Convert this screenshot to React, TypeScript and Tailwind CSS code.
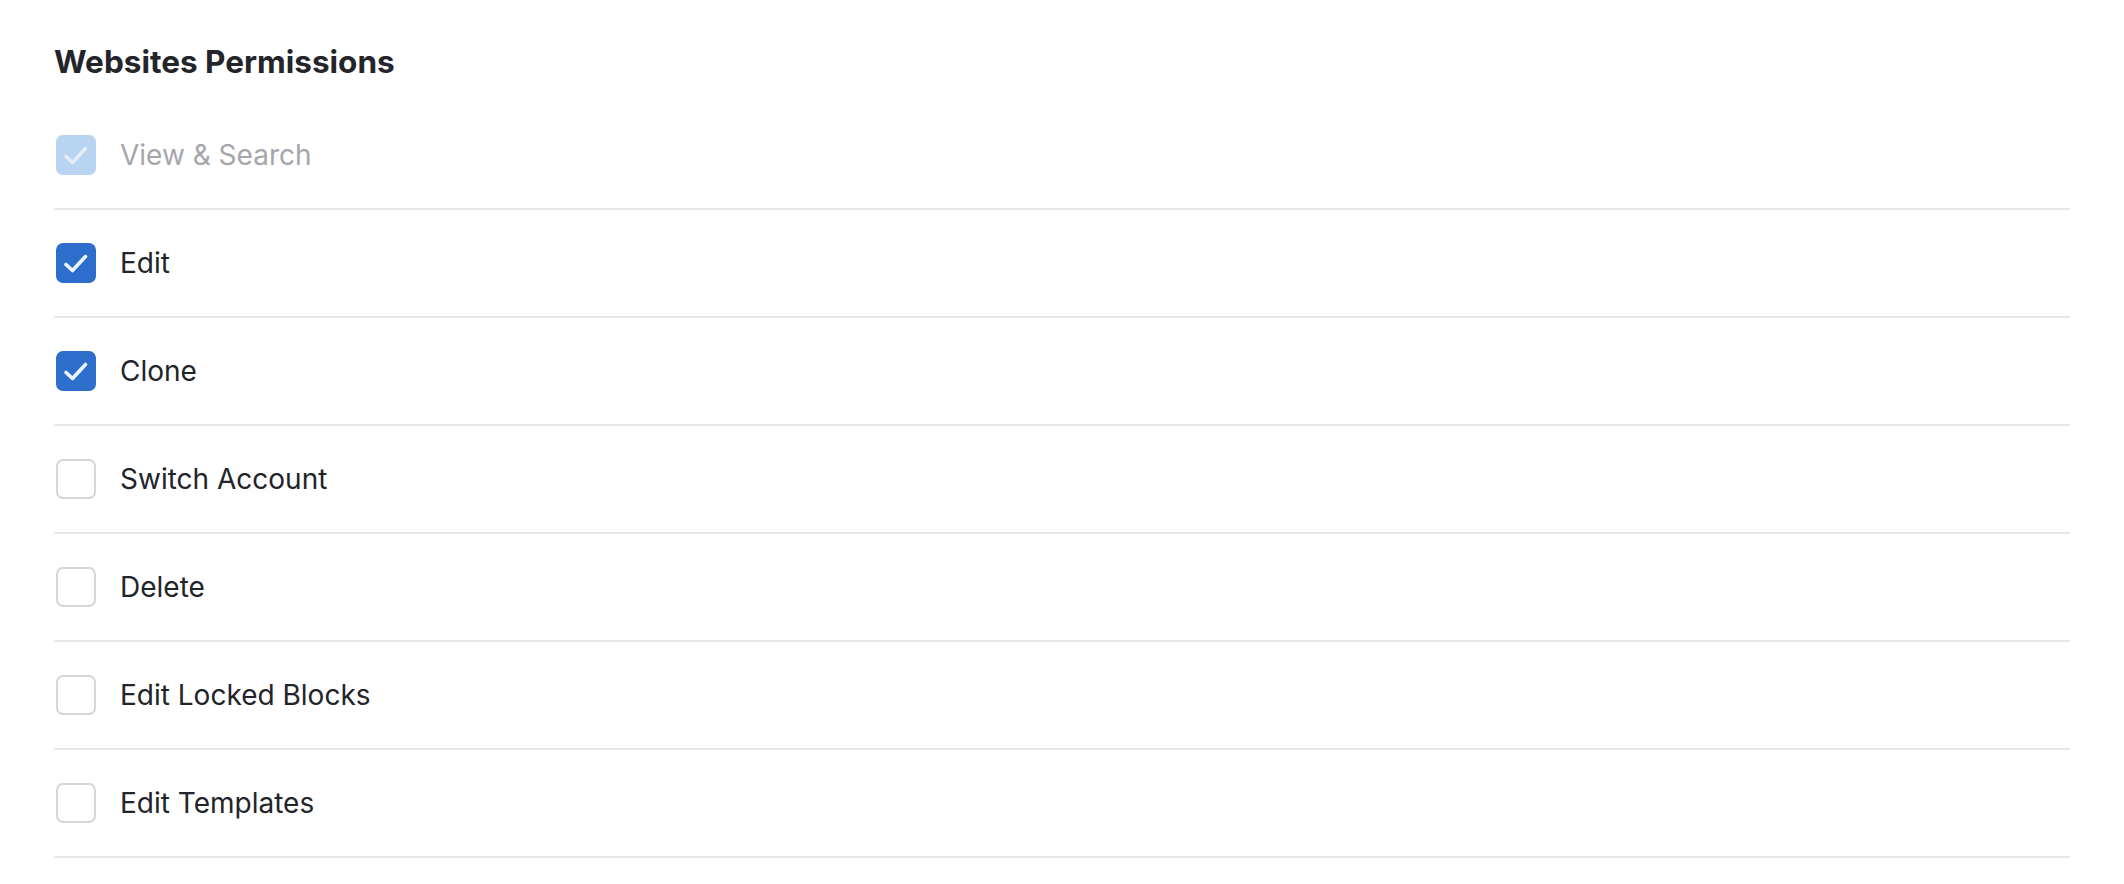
import React from "react";

type Perm = { label: string; checked: boolean; disabled?: boolean };

const perms: Perm[] = [
  { label: "View & Search", checked: true, disabled: true },
  { label: "Edit", checked: true },
  { label: "Clone", checked: true },
  { label: "Switch Account", checked: false },
  { label: "Delete", checked: false },
  { label: "Edit Locked Blocks", checked: false },
  { label: "Edit Templates", checked: false },
];

function Box({ checked, disabled }: { checked: boolean; disabled?: boolean }) {
  if (!checked) {
    return (
      <span className="block w-[40px] h-[40px] rounded-[7px] border-2 border-[#d6d6d6] bg-white shrink-0" />
    );
  }
  return (
    <span
      className={`flex items-center justify-center w-[40px] h-[40px] rounded-[7px] shrink-0 ${
        disabled ? "bg-[#b9d4f1]" : "bg-[#2d6dcc]"
      }`}
    >
      <svg viewBox="0 0 40 40" className="w-[40px] h-[40px]" fill="none">
        <path
          d="M10 21.5 L16.5 27.5 L29.5 13.5"
          stroke={disabled ? "#e4eefa" : "#eef4fc"}
          strokeWidth="3.6"
          strokeLinecap="round"
          strokeLinejoin="round"
        />
      </svg>
    </span>
  );
}

export default function App() {
  return (
    <div className="w-full min-h-[884px] bg-white font-['Inter','Liberation_Sans',sans-serif]">
      <div className="pl-[54px] pr-[54px] pt-[44px]">
        <h2 className="text-[31.5px] leading-[36px] font-bold text-[#23252b] mb-[22px]">
          Websites Permissions
        </h2>
        <div>
          {perms.map((p) => (
            <label
              key={p.label}
              className="flex items-center h-[108px] border-b-2 border-[#e8e8e8] pl-[2px]"
            >
              <Box checked={p.checked} disabled={p.disabled} />
              <span
                className={`ml-[24px] text-[28px] leading-[34px] ${
                  p.disabled ? "text-[#a5a6ab]" : "text-[#22242a]"
                }`}
              >
                {p.label}
              </span>
            </label>
          ))}
        </div>
      </div>
    </div>
  );
}
